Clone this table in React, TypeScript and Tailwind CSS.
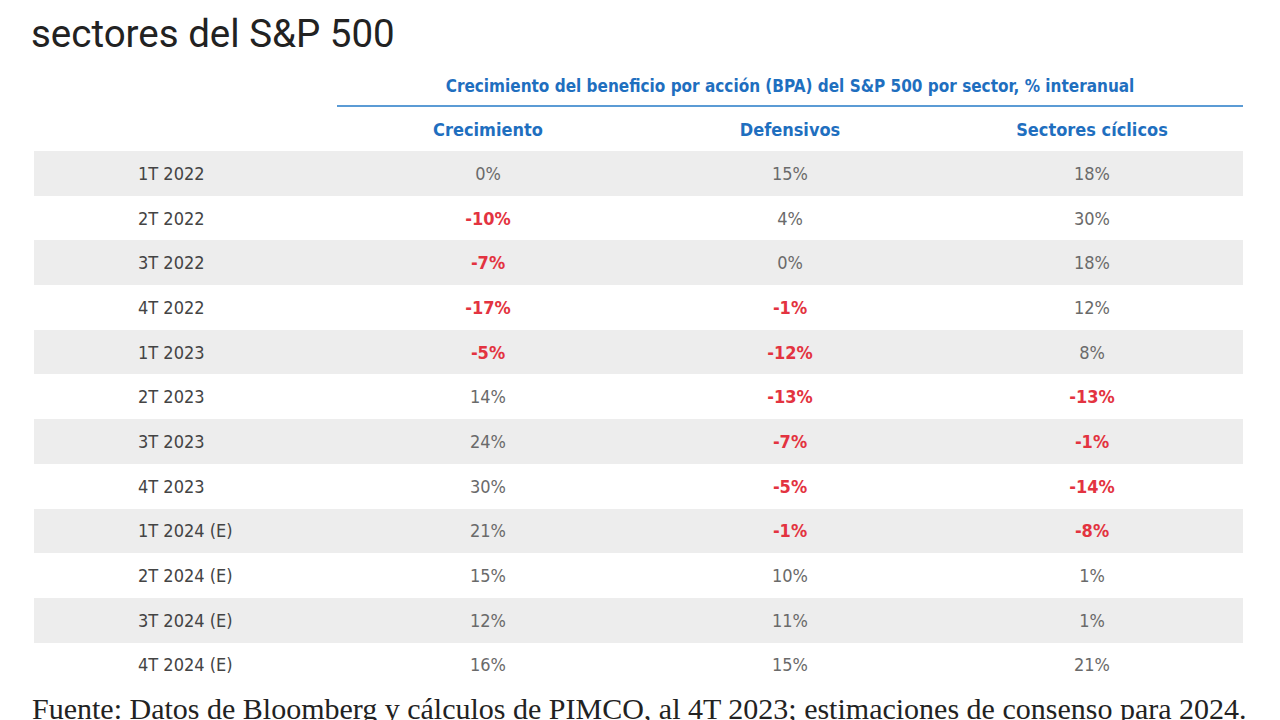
const narrow = "font-['Liberation_Sans_Narrow','DejaVu_Sans_Condensed',Roboto,sans-serif]";

type Row = { label: string; values: string[] };

const rows: Row[] = [
  { label: '1T 2022', values: ['0%', '15%', '18%'] },
  { label: '2T 2022', values: ['-10%', '4%', '30%'] },
  { label: '3T 2022', values: ['-7%', '0%', '18%'] },
  { label: '4T 2022', values: ['-17%', '-1%', '12%'] },
  { label: '1T 2023', values: ['-5%', '-12%', '8%'] },
  { label: '2T 2023', values: ['14%', '-13%', '-13%'] },
  { label: '3T 2023', values: ['24%', '-7%', '-1%'] },
  { label: '4T 2023', values: ['30%', '-5%', '-14%'] },
  { label: '1T 2024 (E)', values: ['21%', '-1%', '-8%'] },
  { label: '2T 2024 (E)', values: ['15%', '10%', '1%'] },
  { label: '3T 2024 (E)', values: ['12%', '11%', '1%'] },
  { label: '4T 2024 (E)', values: ['16%', '15%', '21%'] },
];

const columns = ['Crecimiento', 'Defensivos', 'Sectores cíclicos'];

export default function App() {
  return (
    <div className="w-[1280px] h-[720px] overflow-hidden bg-white">
      {/* Title */}
      <h1 className="pl-[31px] pt-[14px] text-[38.5px] leading-[40px] text-[#222] font-['Roboto',sans-serif] font-normal">
        sectores del S&amp;P 500
      </h1>

      {/* Table */}
      <div className={`ml-[34px] w-[1209px] mt-[21px] ${narrow}`}>
        <div className="grid grid-cols-[303px_1fr]">
          <div />
          <div className="border-b-2 border-[#5b9bd5] pb-[8px] text-center text-[17px] leading-[22px] font-bold text-[#1f6fbf]">
            Crecimiento del beneficio por acción (BPA) del S&amp;P 500 por sector, % interanual
          </div>
        </div>

        <div className="grid grid-cols-[303px_1fr_1fr_1fr] h-[44px] items-center">
          <div />
          {columns.map((c) => (
            <div key={c} className="text-center text-[18px] font-bold text-[#1f6fbf]">
              {c}
            </div>
          ))}
        </div>

        {rows.map((row, i) => (
          <div
            key={row.label}
            className={`grid grid-cols-[303px_1fr_1fr_1fr] h-[44.7px] items-center text-[18px] ${
              i % 2 === 0 ? 'bg-[#ededed]' : 'bg-white'
            }`}
          >
            <div className="pl-[104px] text-[#444]">{row.label}</div>
            {row.values.map((v, j) => (
              <div
                key={j}
                className={`text-center ${
                  v.startsWith('-') ? 'text-[#e33340] font-bold' : 'text-[#6a6a6a]'
                }`}
              >
                {v}
              </div>
            ))}
          </div>
        ))}
      </div>

      {/* Source */}
      <p className="pl-[32px] mt-[5px] text-[30px] leading-[34px] text-[#222] font-['Liberation_Serif',serif] whitespace-nowrap">
        Fuente: Datos de Bloomberg y cálculos de PIMCO, al 4T 2023; estimaciones de consenso para 2024.
      </p>
    </div>
  );
}
